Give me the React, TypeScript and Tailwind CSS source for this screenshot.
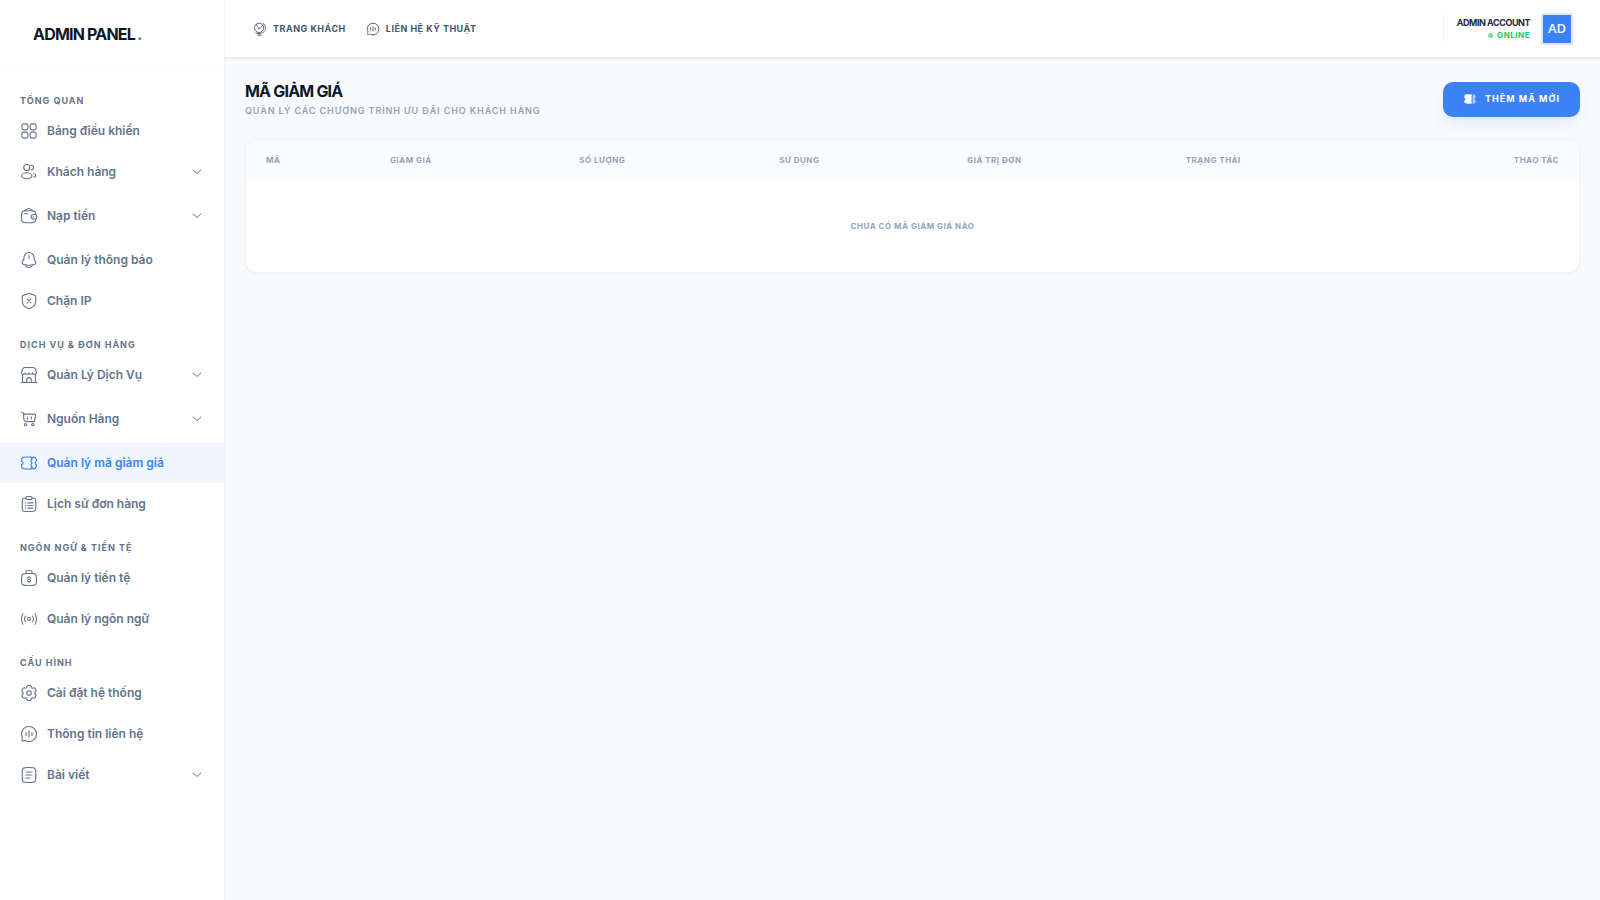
import type { ReactNode } from 'react';

type IconProps = { className?: string };

type MenuItem = {
  label: string;
  icon: (props: IconProps) => ReactNode;
  active?: boolean;
  children?: boolean;
};

type MenuSection = {
  title: string;
  items: MenuItem[];
};

function Svg({ className = 'size-[18px]', children }: { className?: string; children: ReactNode }) {
  return (
    <svg
      className={`${className} shrink-0`}
      viewBox="0 0 24 24"
      fill="none"
      stroke="currentColor"
      strokeWidth="1.5"
      strokeLinecap="round"
      strokeLinejoin="round"
      aria-hidden="true"
    >
      {children}
    </svg>
  );
}

function WidgetIcon(props: IconProps) {
  return (
    <Svg {...props}>
      <rect x="2.5" y="2.5" width="8" height="8" rx="2.5" />
      <rect x="13.5" y="2.5" width="8" height="8" rx="2.5" />
      <rect x="2.5" y="13.5" width="8" height="8" rx="2.5" />
      <rect x="13.5" y="13.5" width="8" height="8" rx="2.5" />
    </Svg>
  );
}

function UsersIcon(props: IconProps) {
  return (
    <Svg {...props}>
      <circle cx="9" cy="6" r="4" />
      <path d="M15 9a3 3 0 1 0 0-6" />
      <ellipse cx="9" cy="17" rx="7" ry="4" />
      <path d="M18 14c1.754.385 3 1.359 3 2.5 0 1.03-1.014 1.923-2.5 2.37" />
    </Svg>
  );
}

function WalletIcon(props: IconProps) {
  return (
    <Svg {...props}>
      <path d="M6 9h4" />
      <path d="M20.833 10H18.23C16.446 10 15 11.343 15 13s1.447 3 3.23 3h2.603c.084 0 .125 0 .16-.002.54-.033.97-.432 1.005-.933.002-.032.002-.071.002-.148v-3.834c0-.077 0-.116-.002-.148-.036-.501-.465-.9-1.005-.933-.035-.002-.076-.002-.16-.002Z" />
      <path d="M20.965 10c-.078-1.872-.328-3.02-1.137-3.828C18.657 5 16.771 5 13 5h-3C6.229 5 4.343 5 3.172 6.172S2 9.229 2 13s0 5.657 1.172 6.828S6.229 21 10 21h3c3.771 0 5.657 0 6.828-1.172.809-.808 1.06-1.956 1.137-3.828" />
      <path d="m6 5 3.735-2.477a3.24 3.24 0 0 1 3.53 0L17 5" />
      <path d="M18 13h.01" strokeWidth="2" />
    </Svg>
  );
}

function BellIcon(props: IconProps) {
  return (
    <Svg {...props}>
      <path d="M18.75 9.71v-.705C18.75 5.136 15.726 2 12 2S5.25 5.136 5.25 9.005v.705a4.4 4.4 0 0 1-.692 2.375L3.45 13.81c-1.011 1.575-.239 3.716 1.52 4.214a25.8 25.8 0 0 0 14.06 0c1.759-.498 2.531-2.639 1.52-4.213l-1.108-1.725a4.4 4.4 0 0 1-.693-2.375Z" />
      <path d="M7.5 19c.655 1.748 2.422 3 4.5 3s3.845-1.252 4.5-3M12 6v4" />
    </Svg>
  );
}

function ShieldCrossIcon(props: IconProps) {
  return (
    <Svg {...props}>
      <path d="M3 10.417c0-3.198 0-4.797.378-5.335.377-.537 1.88-1.052 4.887-2.081l.573-.196C10.405 2.268 11.188 2 12 2s1.595.268 3.162.805l.573.196c3.007 1.029 4.51 1.544 4.887 2.081.378.538.378 2.137.378 5.335v1.574c0 5.638-4.239 8.375-6.899 9.536C13.38 21.842 13.02 22 12 22s-1.38-.158-2.101-.473C7.239 20.365 3 17.63 3 11.991v-1.574Z" />
      <path d="m14.5 9.5-5 5m0-5 5 5" />
    </Svg>
  );
}

function ShopIcon(props: IconProps) {
  return (
    <Svg {...props}>
      <path d="M3.5 11v11M20.5 11v11M1.5 22h21" />
      <path d="M6.8 2h10.4c2 0 2.800.600 3.500 2.700L22 8.500c0 1.600-1.100 2.500-2.500 2.500S17 10.200 17 9.200c0 1-1.100 1.800-2.500 1.800S12 10.200 12 9.200c0 1-1.100 1.800-2.500 1.800S7 10.200 7 9.200C7 10.200 5.900 11 4.500 11S2 10.100 2 8.500l1.300-3.800C4 2.600 4.800 2 6.800 2Z" />
      <path d="M9 21.5v-3c0-2 1-3 3-3s3 1 3 3v3" />
    </Svg>
  );
}

function CartIcon(props: IconProps) {
  return (
    <Svg {...props}>
      <path d="m2 3 .265.088c1.320.440 1.980.660 2.357 1.184S5 5.492 5 6.883V9.500c0 2.828 0 4.243.879 5.121.878.879 2.293.879 5.121.879h8" />
      <path d="M5 5.500h13.500c2 0 2.800.900 2.300 2.900l-1.200 4.700c-.400 1.600-1 2.400-2.600 2.400" />
      <path d="M10 9v3M15 9v3" />
      <circle cx="7.500" cy="19.500" r="1.500" />
      <circle cx="17" cy="19.500" r="1.500" />
    </Svg>
  );
}

function TicketIcon(props: IconProps) {
  return (
    <Svg {...props}>
      <path d="M14.500 4H10C6.229 4 4.343 4 3.172 5.172c-.808.807-1.059 1.955-1.137 3.823-.015.370-.023.555.046.679.070.124.346.278.897.586a1.999 1.999 0 0 1 0 3.480c-.551.308-.827.463-.897.586-.069.124-.061.309-.046.679.078 1.868.329 3.016 1.137 3.823C4.343 20 6.229 20 10 20h4.500" />
      <path d="M14.500 4 16 6.500 14.500 9l1.500 3-1.500 3 1.500 2.500-1.500 2.500" />
      <path d="M18 4c1 .100 1.700.400 2.300 1 .9.900 1.600 2 1.700 4 0 .900-2 1.200-2 3s2 2.100 2 3c-.100 2-.8 3.100-1.700 4-.6.600-1.300.900-2.300 1" />
      <path d="M18 4c-1 .500-2 1.300-2 2.500" />
      <path d="M18 20c-1-.500-2-1.300-2-2.500" />
    </Svg>
  );
}

function ClipboardIcon(props: IconProps) {
  return (
    <Svg {...props}>
      <path d="M16 4c2.175.012 3.353.109 4.121.877C21 5.756 21 7.170 21 9.998v6c0 2.829 0 4.243-.879 5.122-.878.878-2.293.878-5.121.878H9c-2.828 0-4.243 0-5.121-.878C3 20.240 3 18.827 3 15.998v-6c0-2.828 0-4.242.879-5.121C4.647 4.109 5.825 4.012 8 4" />
      <path d="M8 3.500A1.500 1.500 0 0 1 9.500 2h5A1.500 1.500 0 0 1 16 3.500v1A1.500 1.500 0 0 1 14.500 6h-5A1.500 1.500 0 0 1 8 4.500v-1Z" />
      <path d="M10.500 14H17M7 14h.5M7 10.500h.5M7 17.500h.5M10.500 10.500H17M10.500 17.500H17" />
    </Svg>
  );
}

function MoneyBagIcon(props: IconProps) {
  return (
    <Svg {...props}>
      <path d="M2 14c0-3.771 0-5.657 1.172-6.828S6.229 6 10 6h4c3.771 0 5.657 0 6.828 1.172S22 10.229 22 14s0 5.657-1.172 6.828S17.771 22 14 22h-4c-3.771 0-5.657 0-6.828-1.172S2 17.771 2 14ZM16 6c0-1.886 0-2.828-.586-3.414S13.886 2 12 2s-2.828 0-3.414.586S8 4.114 8 6" />
      <path d="M12 17.333c1.105 0 2-.746 2-1.666S13.105 14 12 14s-2-.746-2-1.667c0-.920.895-1.666 2-1.666m0 6.666c-1.105 0-2-.746-2-1.666m2 1.666V18m0-8v.667m0 0c1.105 0 2 .746 2 1.666" />
    </Svg>
  );
}

function StreamIcon(props: IconProps) {
  return (
    <Svg {...props}>
      <circle cx="12" cy="12" r="2" />
      <path d="M7.500 8c-.935 1.067-1.500 2.473-1.500 4s.565 2.933 1.500 4M4 5c-1.246 1.867-2 4.329-2 7s.754 5.133 2 7M16.500 8c.935 1.067 1.500 2.473 1.500 4s-.565 2.933-1.500 4M20 5c1.246 1.867 2 4.329 2 7s-.754 5.133-2 7" />
    </Svg>
  );
}

function SettingsIcon(props: IconProps) {
  return (
    <Svg {...props}>
      <circle cx="12" cy="12" r="3" />
      <path d="M13.765 2.152C13.398 2 12.932 2 12 2s-1.398 0-1.765.152a2 2 0 0 0-1.083 1.083c-.092.223-.129.484-.143.863a1.620 1.620 0 0 1-.790 1.353 1.620 1.620 0 0 1-1.567.008c-.336-.178-.579-.276-.820-.308a2 2 0 0 0-1.478.396C4.040 5.790 3.806 6.193 3.340 7s-.700 1.210-.751 1.605a2 2 0 0 0 .396 1.479c.148.192.355.353.676.555.473.297.777.803.777 1.361s-.304 1.064-.777 1.360c-.321.203-.529.364-.676.556a2 2 0 0 0-.396 1.479c.052.394.285.798.750 1.605.467.807.700 1.210 1.015 1.453a2 2 0 0 0 1.479.396c.240-.032.483-.130.819-.308a1.620 1.620 0 0 1 1.567.008c.483.280.770.795.790 1.353.014.380.050.640.143.863a2 2 0 0 0 1.083 1.083C10.602 22 11.068 22 12 22s1.398 0 1.765-.152a2 2 0 0 0 1.083-1.083c.092-.223.129-.483.143-.863.020-.558.307-1.074.790-1.353a1.620 1.620 0 0 1 1.567-.008c.336.178.579.276.819.308a2 2 0 0 0 1.479-.396c.315-.242.548-.646 1.014-1.453s.700-1.210.751-1.605a2 2 0 0 0-.396-1.479c-.148-.192-.355-.353-.676-.555A1.620 1.620 0 0 1 19.562 12c0-.558.304-1.064.777-1.360.321-.203.529-.364.676-.556a2 2 0 0 0 .396-1.479c-.052-.394-.285-.798-.750-1.605-.467-.807-.700-1.210-1.015-1.453a2 2 0 0 0-1.479-.396c-.240.032-.483.130-.820.308a1.620 1.620 0 0 1-1.566-.008 1.620 1.620 0 0 1-.790-1.353c-.014-.380-.050-.640-.143-.863a2 2 0 0 0-1.083-1.083Z" />
    </Svg>
  );
}

function ChatIcon(props: IconProps) {
  return (
    <Svg {...props}>
      <path d="M12 22c5.523 0 10-4.477 10-10S17.523 2 12 2 2 6.477 2 12c0 1.600.376 3.112 1.043 4.453.178.356.237.763.134 1.148l-.595 2.226a1.300 1.300 0 0 0 1.591 1.592l2.226-.596a1.630 1.630 0 0 1 1.149.133A9.960 9.960 0 0 0 12 22Z" />
      <path d="M12 8v8M8 10v4M16 10v4" />
    </Svg>
  );
}

function DocumentIcon(props: IconProps) {
  return (
    <Svg {...props}>
      <path d="M3 10c0-3.771 0-5.657 1.172-6.828S7.229 2 11 2h2c3.771 0 5.657 0 6.828 1.172S21 6.229 21 10v4c0 3.771 0 5.657-1.172 6.828S16.771 22 13 22h-2c-3.771 0-5.657 0-6.828-1.172S3 17.771 3 14v-4Z" />
      <path d="M8 12h8M8 8h8M8 16h5" />
    </Svg>
  );
}

function GlobeIcon(props: IconProps) {
  return (
    <Svg {...props}>
      <circle cx="10.500" cy="10" r="8" />
      <path d="M17.500 2.500c5 3.500 5.500 10 2 13.500s-9.500 5-14.500 2.500M11 20v2.500M8 22.500h6" />
      <path d="M5.500 5c.500 3 2.500 2 3 4s1 4 2.500 3 .8-3 2.500-4 2.500-1.500 3.500-2" />
    </Svg>
  );
}

function ChevronIcon() {
  return (
    <Svg className="size-3">
      <path d="m4 8 8 7 8-7" strokeWidth="2" />
    </Svg>
  );
}

function TicketBoldIcon() {
  return (
    <svg className="size-[14px] shrink-0" viewBox="0 0 24 24" fill="currentColor" aria-hidden="true">
      <path d="M14 4h-4C6.229 4 4.343 4 3.172 5.172 2.300 6 2.100 7.200 2 9c0 .700 2 1 2 3s-2 2.300-2 3c.100 1.800.300 3 1.172 3.828C4.343 20 6.229 20 10 20h4l1.500-2-1.500-3 1.500-3L14 9l1.500-3L14 4Z" />
      <path opacity=".6" d="M16 4c2.600.050 3.900.250 4.828 1.172C21.700 6 21.900 7.200 22 9c0 .700-2 1-2 3s2 2.300 2 3c-.100 1.800-.300 3-1.172 3.828C19.900 19.750 18.600 19.950 16 20l1-2-1-3 1-3-1-3 1-3-1-2Z" />
    </svg>
  );
}

const sections: MenuSection[] = [
  {
    title: 'Tổng quan',
    items: [
      { label: 'Bảng điều khiển', icon: WidgetIcon },
      { label: 'Khách hàng', icon: UsersIcon, children: true },
      { label: 'Nạp tiền', icon: WalletIcon, children: true },
      { label: 'Quản lý thông báo', icon: BellIcon },
      { label: 'Chặn IP', icon: ShieldCrossIcon },
    ],
  },
  {
    title: 'Dịch vụ & Đơn hàng',
    items: [
      { label: 'Quản Lý Dịch Vụ', icon: ShopIcon, children: true },
      { label: 'Nguồn Hàng', icon: CartIcon, children: true },
      { label: 'Quản lý mã giảm giá', icon: TicketIcon, active: true },
      { label: 'Lịch sử đơn hàng', icon: ClipboardIcon },
    ],
  },
  {
    title: 'Ngôn ngữ & Tiền tệ',
    items: [
      { label: 'Quản lý tiền tệ', icon: MoneyBagIcon },
      { label: 'Quản lý ngôn ngữ', icon: StreamIcon },
    ],
  },
  {
    title: 'Cấu hình',
    items: [
      { label: 'Cài đặt hệ thống', icon: SettingsIcon },
      { label: 'Thông tin liên hệ', icon: ChatIcon },
      { label: 'Bài viết', icon: DocumentIcon, children: true },
    ],
  },
];

const columns = [
  { label: 'Mã', className: 'w-[9.3%] text-left' },
  { label: 'Giảm giá', className: 'w-[14.2%] text-left' },
  { label: 'Số lượng', className: 'w-[15%] text-left' },
  { label: 'Sử dụng', className: 'w-[14.1%] text-left' },
  { label: 'Giá trị đơn', className: 'w-[16.4%] text-left' },
  { label: 'Trạng thái', className: 'text-left' },
  { label: 'Thao tác', className: 'text-right' },
];

function SidebarItem({ item }: { item: MenuItem }) {
  const Icon = item.icon;

  if (item.children) {
    return (
      <li className="mb-1">
        <button
          type="button"
          className="flex h-10 w-full items-center gap-[9px] px-5 text-[12px] font-semibold text-[#64748b]"
        >
          <Icon />
          {item.label}
          <span className="mr-px ml-auto">
            <ChevronIcon />
          </span>
        </button>
      </li>
    );
  }

  return (
    <li className="mb-px">
      <a
        href="#"
        className={`flex h-10 items-center gap-[9px] px-5 text-[12px] font-semibold ${
          item.active ? 'bg-[#eff6ff] text-[#3b82f6]' : 'text-[#64748b]'
        }`}
      >
        <Icon />
        {item.label}
      </a>
    </li>
  );
}

function Sidebar() {
  return (
    <aside className="w-[225px] shrink-0 border-r border-[#f1f5f9] bg-white">
      <div className="flex h-[67px] items-center border-b border-[#f8fafc] px-[33px] pt-[2px]">
        <a href="#" className="text-[16px] font-bold tracking-tighter text-[#0f172a]">
          ADMIN PANEL<span className="ml-[2px] text-[#3b82f6]">.</span>
        </a>
      </div>
      <nav className="pt-[11px]">
        {sections.map((section) => (
          <div key={section.title}>
            <h2 className="px-5 pt-[17px] pb-1 text-[9px] leading-3 font-bold tracking-[1px] text-[#64748b] uppercase">
              {section.title}
            </h2>
            <ul>
              {section.items.map((item) => (
                <SidebarItem key={item.label} item={item} />
              ))}
            </ul>
          </div>
        ))}
      </nav>
    </aside>
  );
}

function Topbar() {
  return (
    <header className="flex h-[58px] items-center justify-between border-b border-[#e9eef4] bg-white pr-[27px] pl-7 shadow-[0_1px_1px_rgba(15,23,42,0.06)]">
      <nav className="flex items-center gap-5 text-[9px] font-bold tracking-[0.5px] text-[#475569] uppercase">
        <a href="#" className="flex items-center gap-[6px]">
          <GlobeIcon className="size-[14px]" />
          Trang khách
        </a>
        <a href="#" className="flex items-center gap-[6px]">
          <ChatIcon className="size-[14px]" />
          Liên hệ kỹ thuật
        </a>
      </nav>
      <div className="flex h-8 items-center gap-[11px] border-l border-[#f1f5f9] pl-[13px]">
        <div className="pt-px text-right">
          <p className="text-[9px] leading-3 font-bold tracking-tighter text-[#1e293b] uppercase">Admin account</p>
          <p className="flex items-center justify-end gap-1 text-[8px] leading-3 font-bold tracking-[0.5px] text-[#22c55e] uppercase">
            <span className="size-[5px] rounded-full bg-[#22c55e] opacity-60" />
            Online
          </p>
        </div>
        <div className="flex size-8 items-center justify-center border-2 border-[#dbeafe] bg-[#3b82f6] font-['Open_Sans',sans-serif] text-[13px] font-semibold text-white">
          AD
        </div>
      </div>
    </header>
  );
}

export default function App() {
  return (
    <div className="flex min-h-screen bg-[#f8fafc] font-['Inter','Liberation_Sans',sans-serif]">
      <Sidebar />
      <div className="min-w-0 flex-1">
        <Topbar />
        <main className="px-5 pt-[21px]">
          <div className="mb-5 flex items-center justify-between">
            <div>
              <h1 className="text-[16px] leading-6 font-bold tracking-tighter text-[#0f172a] uppercase">Mã giảm giá</h1>
              <p className="text-[9px] leading-4 font-semibold tracking-widest text-[#94a3b8] uppercase">
                Quản lý các chương trình ưu đãi cho khách hàng
              </p>
            </div>
            <button
              type="button"
              className="flex h-[35px] items-center gap-2 rounded-[10px] bg-[#3b82f6] px-5 text-[9px] font-bold tracking-[1px] text-white uppercase shadow-lg shadow-blue-500/10"
            >
              <TicketBoldIcon />
              Thêm mã mới
            </button>
          </div>

          <div className="overflow-hidden rounded-xl border border-[#f1f5f9] bg-white shadow-[0_1px_2px_rgba(15,23,42,0.05)]">
            <table className="w-full table-fixed">
              <thead className="bg-[#fbfcfe]">
                <tr>
                  {columns.map((column) => (
                    <th
                      key={column.label}
                      className={`h-10 px-5 text-[8px] font-bold tracking-[0.5px] text-[#94a3b8] uppercase ${column.className}`}
                    >
                      {column.label}
                    </th>
                  ))}
                </tr>
              </thead>
              <tbody>
                <tr>
                  <td
                    colSpan={7}
                    className="px-5 py-10 text-center text-[8px] leading-3 font-bold tracking-[0.5px] text-[#94a3b8] uppercase"
                  >
                    Chưa có mã giảm giá nào
                  </td>
                </tr>
              </tbody>
            </table>
          </div>
        </main>
      </div>
    </div>
  );
}
